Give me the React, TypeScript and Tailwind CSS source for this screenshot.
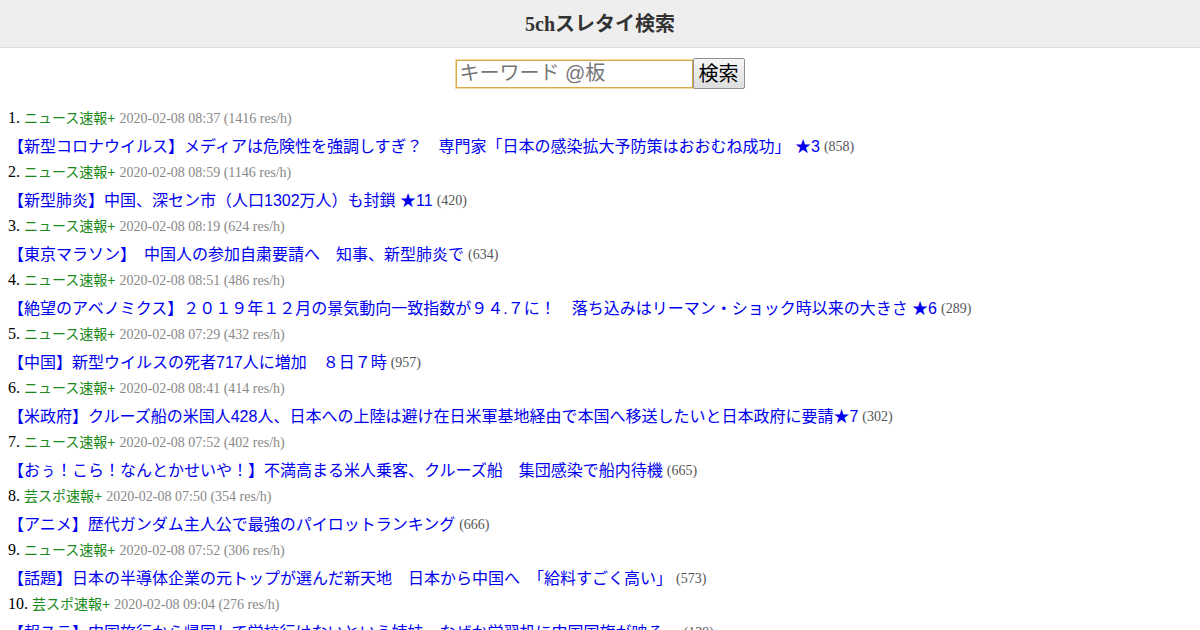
import React from "react";

type Item = { board: string; date: string; rate: string; title: string; count: string };

const items: Item[] = [
  { board: "ニュース速報+", date: "2020-02-08 08:37", rate: "(1416 res/h)", title: "【新型コロナウイルス】メディアは危険性を強調しすぎ？　専門家「日本の感染拡大予防策はおおむね成功」 ★3", count: "(858)" },
  { board: "ニュース速報+", date: "2020-02-08 08:59", rate: "(1146 res/h)", title: "【新型肺炎】中国、深セン市（人口1302万人）も封鎖 ★11", count: "(420)" },
  { board: "ニュース速報+", date: "2020-02-08 08:19", rate: "(624 res/h)", title: "【東京マラソン】　中国人の参加自粛要請へ　知事、新型肺炎で", count: "(634)" },
  { board: "ニュース速報+", date: "2020-02-08 08:51", rate: "(486 res/h)", title: "【絶望のアベノミクス】２０１９年１２月の景気動向一致指数が９４.７に！　落ち込みはリーマン・ショック時以来の大きさ ★6", count: "(289)" },
  { board: "ニュース速報+", date: "2020-02-08 07:29", rate: "(432 res/h)", title: "【中国】新型ウイルスの死者717人に増加　８日７時", count: "(957)" },
  { board: "ニュース速報+", date: "2020-02-08 08:41", rate: "(414 res/h)", title: "【米政府】クルーズ船の米国人428人、日本への上陸は避け在日米軍基地経由で本国へ移送したいと日本政府に要請★7", count: "(302)" },
  { board: "ニュース速報+", date: "2020-02-08 07:52", rate: "(402 res/h)", title: "【おぅ！こら！なんとかせいや！】不満高まる米人乗客、クルーズ船　集団感染で船内待機", count: "(665)" },
  { board: "芸スポ速報+", date: "2020-02-08 07:50", rate: "(354 res/h)", title: "【アニメ】歴代ガンダム主人公で最強のパイロットランキング", count: "(666)" },
  { board: "ニュース速報+", date: "2020-02-08 07:52", rate: "(306 res/h)", title: "【話題】日本の半導体企業の元トップが選んだ新天地　日本から中国へ　「給料すごく高い」", count: "(573)" },
  { board: "芸スポ速報+", date: "2020-02-08 09:04", rate: "(276 res/h)", title: "【報ステ】中国旅行から帰国して学校行けないという姉妹　なぜか学習机に中国国旗が映る　", count: "(139)" },
];

const serif = "font-['Liberation_Serif','Noto_Sans_CJK_JP',serif]";
const sans = "font-['Liberation_Sans','Noto_Sans_CJK_JP',sans-serif]";

export default function App() {
  return (
    <div className={`w-[1200px] h-[630px] overflow-hidden bg-white ${serif}`}>
      <header className="h-[48px] bg-[#eeeeee] border-b border-[#dddddd] flex items-center justify-center">
        <h1 className="text-[20px] font-bold text-[#333333] leading-none">5chスレタイ検索</h1>
      </header>
      <div className="flex justify-center items-center pt-[10px] pb-[16px]">
        <input
          type="text"
          placeholder="キーワード @板"
          className={`w-[237px] h-[28px] border border-[#d9a94a] outline outline-1 outline-[#f0d9a8] pl-[3px] text-[20px] leading-none placeholder:text-[#767676] ${sans}`}
        />
        <button
          className={`h-[31px] w-[52px] text-[20px] leading-none text-black border border-[#8f8f8f] rounded-[2px] bg-gradient-to-b from-[#f6f6f6] to-[#dedede] ${sans}`}
        >
          検索
        </button>
      </div>
      <ol className="px-[8px]">
        {items.map((it, i) => (
          <li key={i}>
            <div className="h-[26px] flex items-center whitespace-nowrap">
              <span className="text-[16px] text-black">{i + 1}.</span>
              <span className={`ml-[4px] text-[14px] text-[#1a8a1a] ${sans}`}>{it.board}</span>
              <span className="ml-[4px] text-[14px] text-[#888888]">
                {it.date} {it.rate}
              </span>
            </div>
            <div className="h-[28px] pt-[3px] flex items-center whitespace-nowrap">
              <a className={`text-[16px] text-[#0000ee] ${sans}`} href="#">
                {it.title}
              </a>
              <span className="ml-[4px] text-[14px] text-[#555555]">{it.count}</span>
            </div>
          </li>
        ))}
      </ol>
    </div>
  );
}
